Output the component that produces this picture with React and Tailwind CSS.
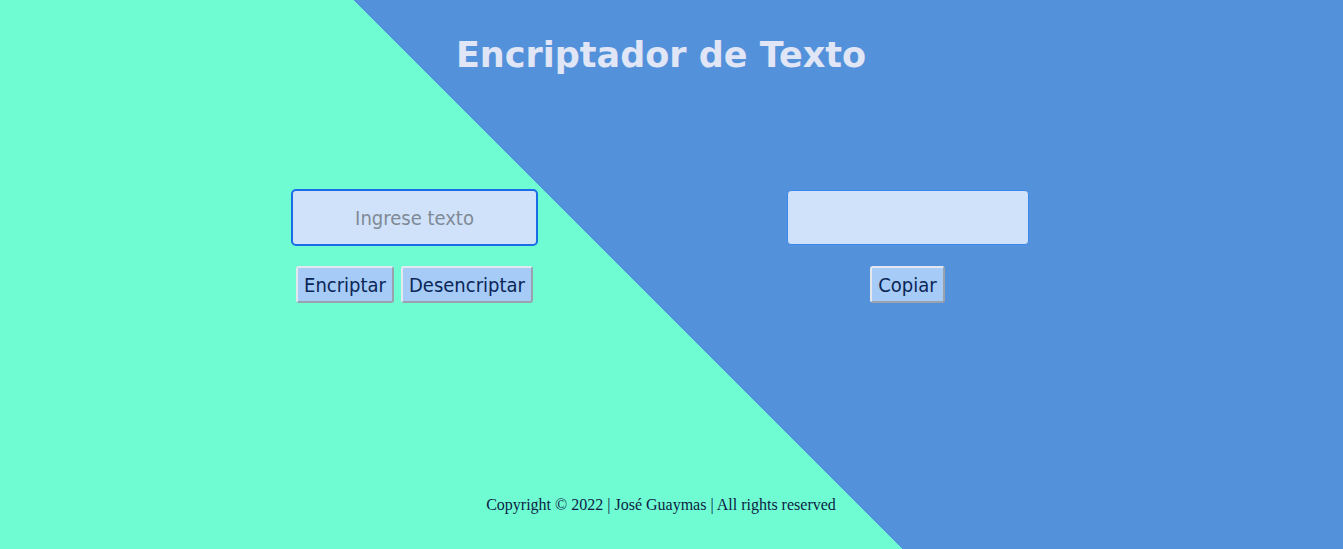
import { useState } from 'react';

function Boton({ children, className = '' }) {
  return (
    <button
      className={
        'h-[37px] px-[6px] rounded-[3px] border-2 border-t-[#e4e8ee] border-l-[#e4e8ee] border-b-[#9aa2ad] border-r-[#9aa2ad] bg-[#a6cbf7] text-[20px] text-[#0b2656] font-["DejaVu_Sans_Condensed","Liberation_Sans",sans-serif] ' +
        className
      }
    >
      {children}
    </button>
  );
}

export default function App() {
  const [texto, setTexto] = useState('');
  const [resultado, setResultado] = useState('');

  return (
    <div className="h-screen w-full overflow-hidden bg-[linear-gradient(45deg,#6ffcd3_47.7%,#5491db_47.7%)] flex flex-col">
      <div className="w-[1322px] flex flex-col items-center h-full">
        {/* TITULO */}
        <h1 className="pt-[35px] text-[35px] leading-[40px] font-bold text-[#e0e6f5] font-['DejaVu_Sans',Verdana,sans-serif]">
          Encriptador de Texto
        </h1>

        {/* COLUMNAS */}
        <div className="flex justify-center gap-[246px] mt-[114px]">
          <div className="w-[247px] flex flex-col items-center">
            <input
              value={texto}
              onChange={(e) => setTexto(e.target.value)}
              placeholder="Ingrese texto"
              className="w-[247px] h-[57px] rounded-[5px] border-2 border-[#1a6de6] bg-[#d0e2f9] text-center text-[20px] text-[#1a2a4a] placeholder:text-[#7f8a96] outline-none font-['DejaVu_Sans_Condensed','Liberation_Sans',sans-serif]"
            />
            <div className="flex gap-[7px] mt-[20px]">
              <Boton>Encriptar</Boton>
              <Boton>Desencriptar</Boton>
            </div>
          </div>

          <div className="w-[247px] flex flex-col items-center">
            <input
              value={resultado}
              onChange={(e) => setResultado(e.target.value)}
              className="w-[242px] h-[55px] mt-[1px] rounded-[4px] border border-[#3d85ee] bg-[#d0e2f9] text-center text-[20px] outline-none font-['DejaVu_Sans_Condensed','Liberation_Sans',sans-serif]"
            />
            <Boton className="mt-[21px]">Copiar</Boton>
          </div>
        </div>

        {/* FOOTER */}
        <footer className="mt-auto mb-[34px] text-[16px] leading-[20px] text-[#0c1c44] font-['Liberation_Serif','Times_New_Roman',serif]">
          Copyright © 2022 | José Guaymas | All rights reserved
        </footer>
      </div>
    </div>
  );
}
